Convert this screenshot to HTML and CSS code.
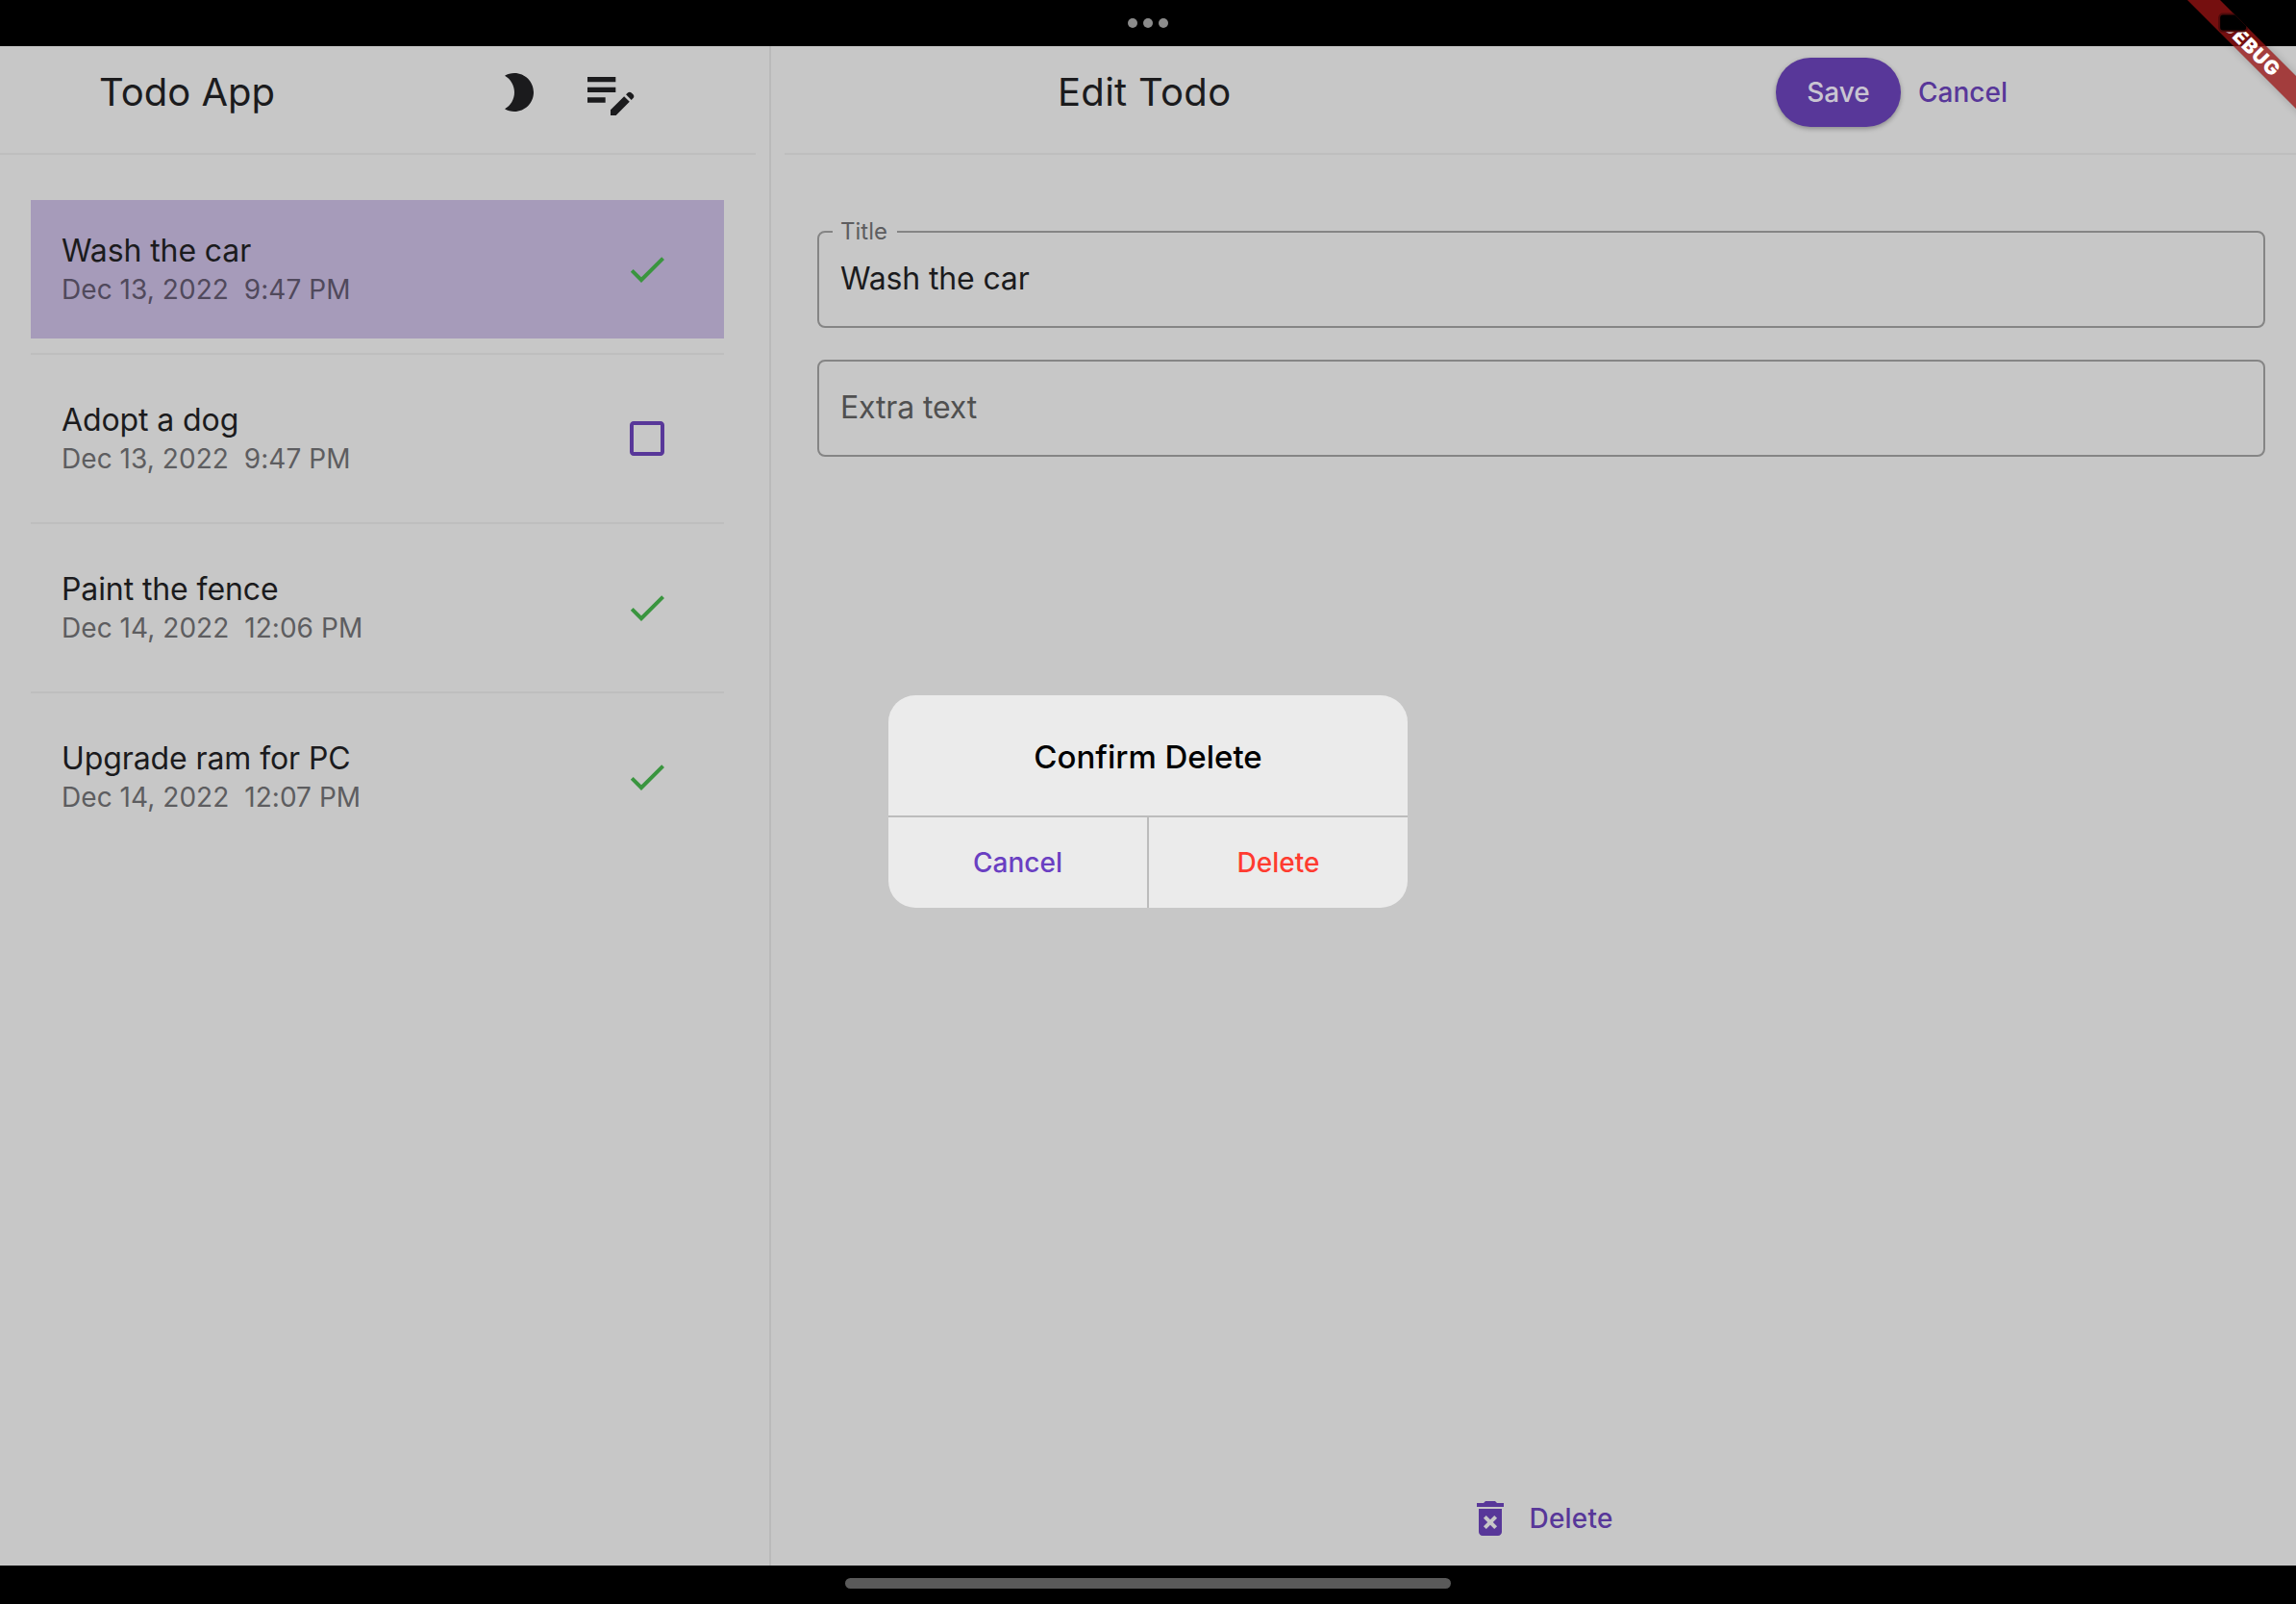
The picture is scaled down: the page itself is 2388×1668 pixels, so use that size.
FILE: index.html
```html
<!DOCTYPE html>
<html lang="en">
<head>
  <meta charset="UTF-8" />
  <title>Todo App</title>
  <link rel="stylesheet" href="styles.css">
</head>
<body>

  <div class="status-bar">
    <span class="dot"></span><span class="dot"></span><span class="dot"></span>
  </div>

  <div class="app">
    <section class="list-pane">
      <header class="list-header">
        <h1 class="app-title">Todo App</h1>
        <svg class="icon-moon" viewBox="0 0 24 24"><path d="M10 2c-1.82 0-3.53.5-5 1.35C7.99 5.08 10 8.3 10 12s-2.01 6.92-5 8.65C6.47 21.5 8.18 22 10 22c5.52 0 10-4.48 10-10S15.52 2 10 2z"/></svg>
        <svg class="icon-note" viewBox="0 0 24 24"><path d="M3 10h11v2H3v-2zm0-2h11V6H3v2zm0 8h7v-2H3v2zm15.01-3.13.71-.71c.39-.39 1.02-.39 1.41 0l.71.71c.39.39.39 1.02 0 1.41l-.71.71-2.12-2.12zm-.71.71L12 18.88V21h2.12l5.3-5.3-2.12-2.12z"/></svg>
      </header>

      <ul class="todo-list">
        <li class="todo selected">
          <div class="todo-text">
            <div class="todo-title">Wash the car</div>
            <div class="todo-date">Dec 13, 2022&nbsp; 9:47 PM</div>
          </div>
          <svg class="check" viewBox="0 0 24 24"><path d="M9 16.17L4.83 12l-1.42 1.41L9 19 21 7l-1.41-1.41z"/></svg>
        </li>
        <li class="todo">
          <div class="todo-text">
            <div class="todo-title">Adopt a dog</div>
            <div class="todo-date">Dec 13, 2022&nbsp; 9:47 PM</div>
          </div>
          <svg class="check blank" viewBox="0 0 24 24"><path d="M19 5v14H5V5h14m0-2H5c-1.1 0-2 .9-2 2v14c0 1.1.9 2 2 2h14c1.1 0 2-.9 2-2V5c0-1.1-.9-2-2-2z"/></svg>
        </li>
        <li class="todo">
          <div class="todo-text">
            <div class="todo-title">Paint the fence</div>
            <div class="todo-date">Dec 14, 2022&nbsp; 12:06 PM</div>
          </div>
          <svg class="check" viewBox="0 0 24 24"><path d="M9 16.17L4.83 12l-1.42 1.41L9 19 21 7l-1.41-1.41z"/></svg>
        </li>
        <li class="todo">
          <div class="todo-text">
            <div class="todo-title">Upgrade ram for PC</div>
            <div class="todo-date">Dec 14, 2022&nbsp; 12:07 PM</div>
          </div>
          <svg class="check" viewBox="0 0 24 24"><path d="M9 16.17L4.83 12l-1.42 1.41L9 19 21 7l-1.41-1.41z"/></svg>
        </li>
      </ul>
    </section>

    <section class="edit-pane">
      <header class="edit-header">
        <h2 class="edit-title">Edit Todo</h2>
        <button class="btn-save">Save</button>
        <button class="btn-cancel">Cancel</button>
      </header>

      <form class="edit-form">
        <div class="field">
          <span class="field-label">Title</span>
          <span class="field-value">Wash the car</span>
        </div>
        <div class="field">
          <span class="field-hint">Extra text</span>
        </div>
      </form>

      <div class="edit-footer">
        <svg class="icon-trash" viewBox="0 0 24 24"><path d="M6 19c0 1.1.9 2 2 2h8c1.1 0 2-.9 2-2V7H6v12zm2.46-7.12l1.41-1.41L12 12.59l2.12-2.12 1.41 1.41L13.41 14l2.12 2.12-1.41 1.41L12 15.41l-2.12 2.12-1.41-1.41L10.59 14l-2.13-2.12zM15.5 4l-1-1h-5l-1 1H5v2h14V4z"/></svg>
        <span class="delete-link">Delete</span>
      </div>
    </section>
  </div>

  <div class="home-bar"><span class="home-indicator"></span></div>

  <div class="dialog">
    <div class="dialog-title">Confirm Delete</div>
    <div class="dialog-actions">
      <div class="dialog-action cancel">Cancel</div>
      <div class="dialog-action destructive">Delete</div>
    </div>
  </div>

  <div class="banner"><span class="banner-text">DEBUG</span><i class="status-cutout"></i></div>

</body>
</html>
```
FILE: styles.css
```css
* {
  box-sizing: border-box;
  margin: 0;
  padding: 0;
}

html, body {
  height: 100%;
  overflow: hidden;
}

body {
  background-color: #c7c7c7;
  color: #1b1b1d;
  display: flex;
  flex-direction: column;
  font-family: Inter, "Noto Sans", sans-serif;
  position: relative;
}

.status-bar {
  height: 48px;
  background-color: #000;
  display: flex;
  align-items: center;
  justify-content: center;
  gap: 6px;
}

.dot {
  width: 10px;
  height: 10px;
  border-radius: 50%;
  background-color: #8c8c8c;
}

.app {
  flex: 1;
  display: flex;
  min-height: 0;
}

.list-pane {
  width: 802px;
  border-right: 2px solid #bababa;
  flex-shrink: 0;
}

.list-header {
  height: 113px;
  margin-right: 14px;
  border-bottom: 2px solid #bebebe;
  display: flex;
  align-items: center;
  padding: 0 0 16px 103px;
}

.app-title {
  font-size: 40px;
  font-weight: 400;
  width: 412px;
}

.icon-moon {
  width: 48px;
  height: 48px;
  fill: #1b1b1d;
}

.icon-note {
  width: 64px;
  height: 64px;
  margin-left: 40px;
  fill: #1b1b1d;
}

.todo-list {
  list-style: none;
  padding: 47px 32px 0;
  width: 785px;
}

.todo {
  height: 144px;
  margin-bottom: 32px;
  padding: 0 32px;
  display: flex;
  align-items: center;
  justify-content: space-between;
  position: relative;
}

.todo::after {
  content: "";
  position: absolute;
  left: 0;
  right: 0;
  bottom: -17px;
  height: 2px;
  background-color: #bebebe;
}

.todo:last-child::after {
  display: none;
}

.todo.selected {
  background-color: #a69bba;
}

.todo-title {
  font-size: 32px;
  line-height: 40px;
  letter-spacing: -0.1px;
  margin-top: -1px;
}

.todo-date {
  font-size: 28px;
  line-height: 36px;
  margin-top: 2px;
  letter-spacing: 0.05px;
  color: #5d5d60;
}

.selected .todo-date {
  color: #50495c;
}

.check {
  width: 48px;
  height: 48px;
  margin-right: 24px;
  fill: #3a953f;
}

.check.blank {
  fill: #583799;
}

.edit-pane {
  flex: 1;
  display: flex;
  flex-direction: column;
}

.edit-header {
  height: 113px;
  margin-left: 14px;
  border-bottom: 2px solid #bebebe;
  display: flex;
  align-items: center;
  padding: 0 0 16px 284px;
}

.edit-title {
  font-size: 40px;
  font-weight: 400;
  letter-spacing: 0.3px;
  width: 747px;
}

.btn-save {
  width: 130px;
  height: 72px;
  border: none;
  border-radius: 36px;
  background-color: #583799;
  color: #c9c5d2;
  font-family: inherit;
  font-size: 28px;
  font-weight: 500;
  box-shadow: 0 2px 5px rgba(0,0,0,0.3);
}

.btn-cancel {
  margin-left: 18px;
  border: none;
  background: none;
  color: #583799;
  font-family: inherit;
  font-size: 28px;
  font-weight: 500;
}

.edit-form {
  flex: 1;
  padding: 79px 32px 0 48px;
  display: flex;
  flex-direction: column;
  gap: 33px;
}

.field {
  height: 101px;
  border: 2px solid #858585;
  border-radius: 8px;
  padding: 0 22px 2px;
  display: flex;
  align-items: center;
  font-size: 32px;
  letter-spacing: -0.15px;
  position: relative;
}

.field-label {
  position: absolute;
  left: 14px;
  top: -13px;
  padding: 0 10px 0 8px;
  font-size: 24px;
  line-height: 24px;
  letter-spacing: 0;
  color: #5d5d60;
  background-color: #c7c7c7;
}

.field-hint {
  color: #505050;
}

.edit-footer {
  height: 96px;
  display: flex;
  align-items: center;
  justify-content: center;
  gap: 16px;
  padding: 0 0 2px 14px;
}

.icon-trash {
  width: 48px;
  height: 48px;
  fill: #583799;
}

.delete-link {
  font-size: 28px;
  font-weight: 500;
  letter-spacing: 0.2px;
  color: #583799;
}

.home-bar {
  height: 40px;
  background-color: #000;
  display: flex;
  justify-content: center;
  padding-top: 13px;
}

.home-indicator {
  width: 630px;
  height: 11px;
  border-radius: 6px;
  background-color: #5a5a5a;
}

.dialog {
  position: absolute;
  left: 924px;
  top: 723px;
  width: 540px;
  height: 221px;
  border-radius: 28px;
  background-color: #ebebeb;
  display: flex;
  flex-direction: column;
  overflow: hidden;
}

.dialog-title {
  height: 127px;
  border-bottom: 2px solid #bcbcbc;
  padding-top: 2px;
  display: flex;
  align-items: center;
  justify-content: center;
  font-size: 33px;
  font-weight: 500;
  color: #000;
}

.dialog-actions {
  flex: 1;
  display: flex;
}

.dialog-action {
  flex: 1;
  display: flex;
  align-items: center;
  justify-content: center;
  font-size: 28px;
  font-weight: 500;
}

.dialog-action.cancel {
  color: #6a3fc2;
  border-right: 2px solid #bcbcbc;
}

.dialog-action.destructive {
  color: #ff3b30;
}

.banner {
  position: absolute;
  top: 36px;
  right: -52px;
  width: 200px;
  height: 24px;
  transform: rotate(45deg);
  background-color: rgba(152, 20, 20, 0.77);
  box-shadow: 0 0 8px rgba(0,0,0,0.2);
  overflow: hidden;
  display: flex;
  align-items: center;
  justify-content: center;
  color: #fff;
  font-size: 20.4px;
  line-height: 24px;
  font-weight: 900;
  letter-spacing: 1px;
}

.banner-text {
  margin-left: 4px;
}

.status-cutout {
  position: absolute;
  left: 54.5px;
  top: -3.3px;
  width: 31px;
  height: 20px;
  border: 2px solid #4e0b0b;
  border-radius: 5px;
  background-color: #000;
  transform: rotate(-45deg);
}
```
